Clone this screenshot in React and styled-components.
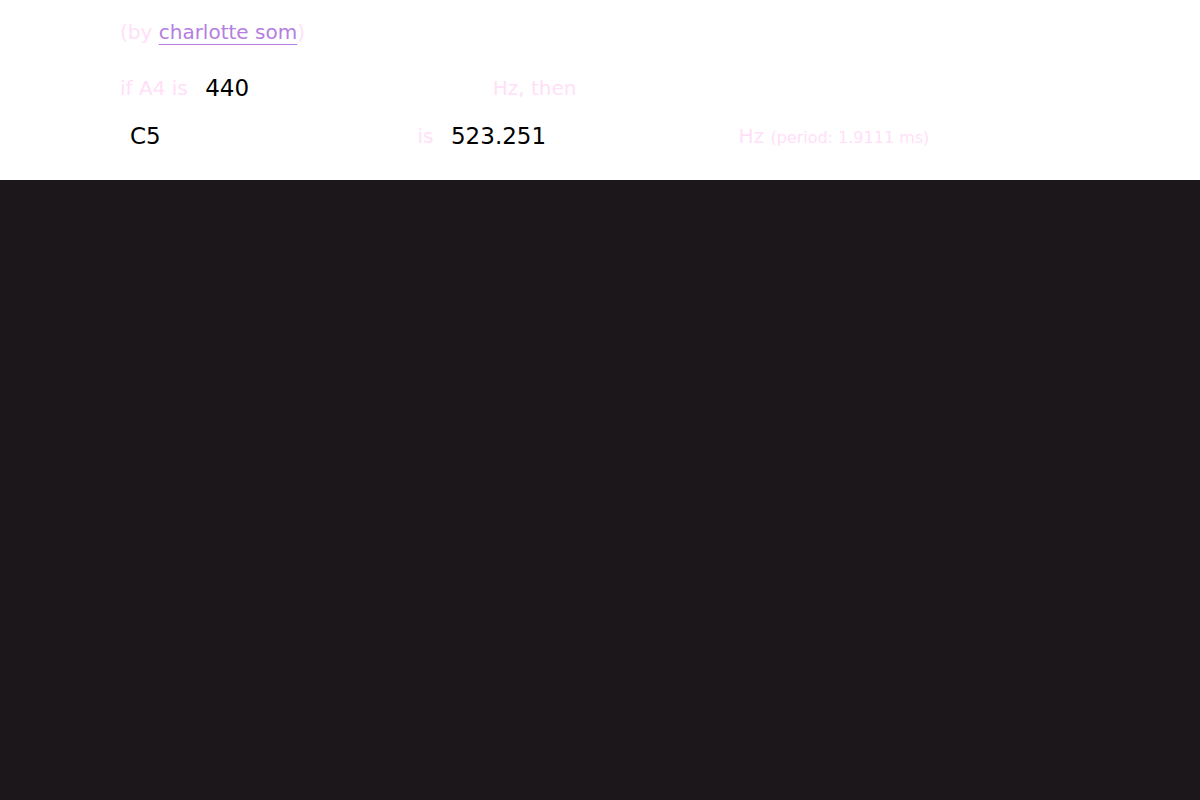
import styled, { createGlobalStyle } from "styled-components";
import { useState } from "react";

const NOTES = ["C", "C#", "D", "D#", "E", "F", "F#", "G", "G#", "A", "A#", "B"];

// semitones away from A4
const noteOffset = (name) => {
  const m = name.trim().match(/^([A-Ga-g]#?)(-?\d+)$/);
  if (!m) return null;
  const idx = NOTES.indexOf(m[1].toUpperCase());
  if (idx < 0) return null;
  return idx - 9 + (parseInt(m[2], 10) - 4) * 12;
};

const App = () => {
  const [a4, setA4] = useState("440");
  const [note, setNote] = useState("C5");

  const offset = noteOffset(note);
  const base = parseFloat(a4);
  const freq = offset === null || isNaN(base) ? NaN : base * Math.pow(2, offset / 12);
  const period = 1000 / freq;

  return (
    <>
      <GlobalStyle />
      <Header>
        <Byline>
          (by <a href="#">charlotte som</a>)
        </Byline>
        <Row>
          <Label>if A4 is</Label>
          <Field value={a4} onChange={(e) => setA4(e.target.value)} />
          <Label>Hz, then</Label>
        </Row>
        <Row>
          <Field value={note} onChange={(e) => setNote(e.target.value)} />
          <Label>is</Label>
          <Field value={isNaN(freq) ? "" : +freq.toFixed(3)} readOnly />
          <Label>
            Hz <small>(period: {isNaN(period) ? "?" : period.toFixed(4)} ms)</small>
          </Label>
        </Row>
      </Header>
    </>
  );
};

const GlobalStyle = createGlobalStyle`
  html, body {
    margin: 0;
    min-height: 100%;
    background-color: #1b171b;
    font-family: "DejaVu Sans", sans-serif;
  }
`;

const Header = styled.div`
  background-color: #fff;
  height: 180px;
  box-sizing: border-box;
  padding: 20px 120px 0;
`;

const Byline = styled.p`
  margin: 0 0 24px;
  font-size: 20px;
  line-height: 24px;
  color: #ffe0f8;
  a {
    color: #b57ddf;
    text-decoration: underline;
    text-decoration-color: #b57ddf;
    text-underline-offset: 5px;
    text-decoration-thickness: 1px;
  }
`;

const Row = styled.div`
  display: flex;
  align-items: center;
  gap: 7.5px;
  height: 40px;
  & + & {
    margin-top: 8px;
  }
`;

const Label = styled.span`
  font-size: 20px;
  color: #ffe0f8;
  small {
    font-size: 16px;
  }
`;

const Field = styled.input`
  width: 290px;
  height: 40px;
  box-sizing: border-box;
  padding: 0 10px;
  border: none;
  outline: none;
  background: #fff;
  color: #000;
  font-family: "DejaVu Sans", sans-serif;
  font-size: 23px;
`;

export default App;
